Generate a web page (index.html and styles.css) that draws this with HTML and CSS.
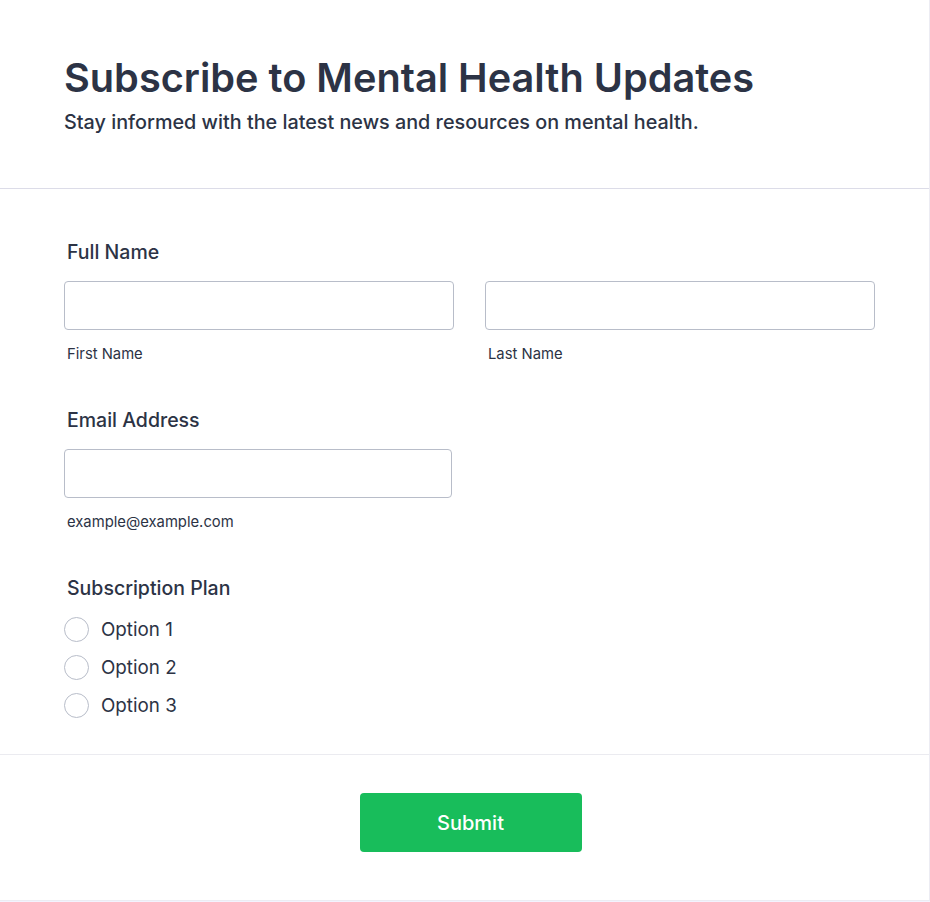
FILE: index.html
```html
<!DOCTYPE html>
<html lang="en">

<head>
  <meta charset="UTF-8">
  <meta name="viewport" content="width=device-width, initial-scale=1.0">
  <title>Subscribe to Mental Health Updates</title>
  <link rel="stylesheet" href="styles.css">
</head>

<body>
  <form class="card">
    <div class="header">
      <h1>Subscribe to Mental Health Updates</h1>
      <p>Stay informed with the latest news and resources on mental health.</p>
    </div>

    <div class="fields">
      <div class="field">
        <label class="field-label">Full Name</label>
        <div class="name-row">
          <div class="sub">
            <input type="text" class="input">
            <span class="hint">First Name</span>
          </div>
          <div class="sub">
            <input type="text" class="input">
            <span class="hint">Last Name</span>
          </div>
        </div>
      </div>

      <div class="field">
        <label class="field-label">Email Address</label>
        <div class="sub email">
          <input type="email" class="input">
          <span class="hint">example@example.com</span>
        </div>
      </div>

      <div class="field">
        <label class="field-label">Subscription Plan</label>
        <div class="options">
          <label class="option"><input type="radio" name="plan"> Option 1</label>
          <label class="option"><input type="radio" name="plan"> Option 2</label>
          <label class="option"><input type="radio" name="plan"> Option 3</label>
        </div>
      </div>
    </div>

    <div class="footer">
      <button type="button" class="submit">Submit</button>
    </div>
  </form>
</body>

</html>
```

FILE: styles.css
```css
* {
  box-sizing: border-box;
}

body {
  margin: 0;
  background: #f3f3fe;
  font-family: Inter, "Noto Sans", sans-serif;
  color: #2c3345;
}

.card {
  width: 930px;
  height: 901px;
  background: #fff;
  border-right: 1px solid #ececf3;
  border-bottom: 1px solid #ececf3;
}

/* 標題區 */
.header {
  height: 189px;
  padding: 54px 64px 0;
  border-bottom: 1px solid #dcdce8;
}

.header h1 {
  margin: 0;
  font-size: 39.7px;
  font-weight: 600;
  line-height: 48px;
}

.header p {
  margin: 8px 0 0;
  font-size: 19.8px;
  font-weight: 500;
  line-height: 24px;
}

/* 表單欄位 */
.fields {
  height: 566px;
  padding: 51px 54px 0 64px;
  border-bottom: 1px solid #ebebf0;
}

.field {
  margin-bottom: 45px;
}

.field-label {
  display: block;
  padding-left: 3px;
  margin-bottom: 17px;
  font-size: 19.5px;
  font-weight: 500;
  line-height: 24px;
}

.name-row {
  display: grid;
  grid-template-columns: 1fr 1fr;
  gap: 31px;
}

.sub {
  display: flex;
  flex-direction: column;
}

.email {
  width: 388px;
}

.input {
  height: 49px;
  border: 1px solid #b8bdc9;
  border-radius: 4px;
  background: #fff;
}

.hint {
  padding-left: 3px;
  margin-top: 15px;
  font-size: 14.8px;
  line-height: 18px;
  color: #2c3345;
}

.options {
  display: flex;
  flex-direction: column;
  gap: 13px;
  margin-top: 1px;
}

.option {
  display: flex;
  align-items: center;
  gap: 12px;
  font-size: 18.8px;
  line-height: 24px;
}

.option input {
  appearance: none;
  margin: 0;
  width: 25px;
  height: 25px;
  border: 1px solid #b8bdc9;
  border-radius: 50%;
  background: #fff;
}

/* 送出按鈕 */
.footer {
  display: flex;
  justify-content: center;
  padding-top: 38px;
  padding-left: 12px;
}

.submit {
  width: 222px;
  height: 59px;
  border: none;
  border-radius: 4px;
  background: #18bd5b;
  color: #fff;
  font-family: inherit;
  font-size: 20px;
  font-weight: 500;
}
```
